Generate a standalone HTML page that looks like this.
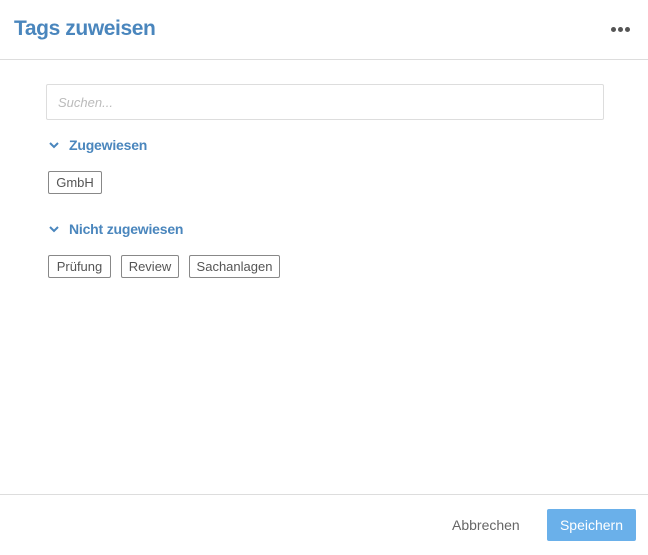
<!DOCTYPE html>
<html><head><meta charset="utf-8"><style>
*{margin:0;padding:0;box-sizing:border-box}
body{width:648px;height:555px;background:#fff;font-family:"Liberation Sans",sans-serif;position:relative;overflow:hidden}
.abs{position:absolute}
.title{left:14px;top:17px;font-size:21px;color:#4a86bd;font-weight:bold;letter-spacing:-0.4px}
.dot{width:5px;height:5px;border-radius:50%;background:#555;top:27px}
.line{left:0;width:648px;height:1px;background:#ddd}
.search{left:46px;top:84px;width:558px;height:36px;border:1px solid #ddd;border-radius:2px;font-style:italic;color:#bbb;font-size:13px;padding:10px 11px}
.sec{font-size:14px;color:#4a86bd;font-weight:bold;letter-spacing:-0.2px}
.tag{border:1px solid #888;border-radius:2px;height:23px;font-size:13px;color:#555;padding:3px 0;line-height:15px;text-align:center}
.btn{left:547px;top:509px;width:89px;height:32px;background:#6ab0ea;border-radius:2px;color:#fff;font-size:14px;text-align:center;line-height:32px}
</style></head><body>
<div class="abs title">Tags zuweisen</div>
<div class="abs dot" style="left:611px"></div><div class="abs dot" style="left:618px"></div><div class="abs dot" style="left:625px"></div>
<div class="abs line" style="top:59px"></div>
<div class="abs search">Suchen...</div>
<svg class="abs" style="left:48px;top:141px" width="12" height="9"><path d="M2 2 L6 6 L10 2" stroke="#4a86bd" stroke-width="2" fill="none"/></svg>
<div class="abs sec" style="left:69px;top:137px">Zugewiesen</div>
<div class="abs tag" style="left:48px;top:171px;width:54px">GmbH</div>
<svg class="abs" style="left:48px;top:225px" width="12" height="9"><path d="M2 2 L6 6 L10 2" stroke="#4a86bd" stroke-width="2" fill="none"/></svg>
<div class="abs sec" style="left:69px;top:221px">Nicht zugewiesen</div>
<div class="abs tag" style="left:48px;top:255px;width:63px">Prüfung</div>
<div class="abs tag" style="left:121px;top:255px;width:58px">Review</div>
<div class="abs tag" style="left:189px;top:255px;width:91px">Sachanlagen</div>
<div class="abs line" style="top:494px"></div>
<div class="abs" style="left:452px;top:517px;font-size:14px;color:#666">Abbrechen</div>
<div class="abs btn">Speichern</div>
</body></html>
